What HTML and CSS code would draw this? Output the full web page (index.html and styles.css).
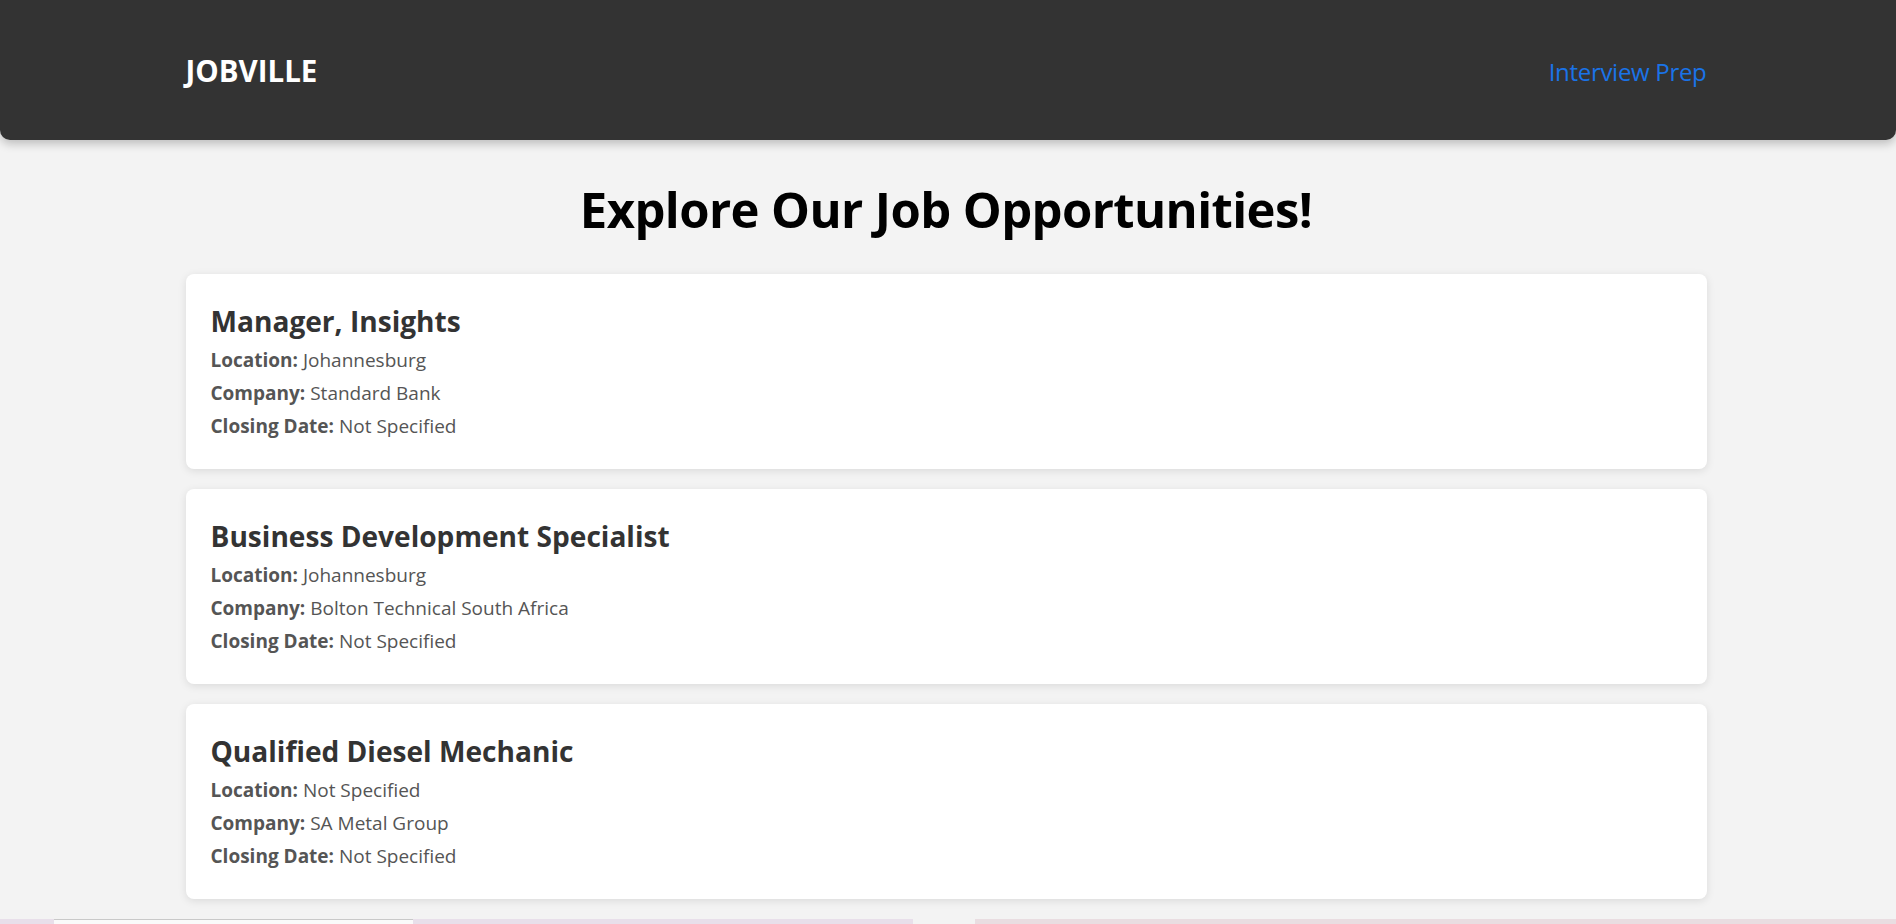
FILE: index.html
```html
<!DOCTYPE html>
<html lang="en">
<head>
<meta charset="utf-8">
<title>Jobville</title>
<link rel="stylesheet" href="styles.css">
</head>
<body>
<header class="site-header">
  <div class="header-inner">
    <div class="logo">JOBVILLE</div>
    <a class="nav-link" href="#">Interview Prep</a>
  </div>
</header>
<main class="main">
  <h1 class="page-title">Explore Our Job Opportunities!</h1>
  <div class="job-list">
    <article class="job-card">
      <h2 class="job-title">Manager, Insights</h2>
      <p class="job-meta"><strong>Location:</strong> Johannesburg</p>
      <p class="job-meta"><strong>Company:</strong> Standard Bank</p>
      <p class="job-meta"><strong>Closing Date:</strong> Not Specified</p>
    </article>
    <article class="job-card">
      <h2 class="job-title">Business Development Specialist</h2>
      <p class="job-meta"><strong>Location:</strong> Johannesburg</p>
      <p class="job-meta"><strong>Company:</strong> Bolton Technical South Africa</p>
      <p class="job-meta"><strong>Closing Date:</strong> Not Specified</p>
    </article>
    <article class="job-card">
      <h2 class="job-title">Qualified Diesel Mechanic</h2>
      <p class="job-meta"><strong>Location:</strong> Not Specified</p>
      <p class="job-meta"><strong>Company:</strong> SA Metal Group</p>
      <p class="job-meta"><strong>Closing Date:</strong> Not Specified</p>
    </article>
  </div>
</main>
<section class="below">
  <div class="below-left"><div class="below-box"></div></div>
  <div class="below-right"></div>
</section>
</body>
</html>
```
FILE: styles.css
```css
* { box-sizing: border-box; }
html, body { margin: 0; padding: 0; }
body {
  background: #f3f3f3;
  font-family: "Open Sans", "Noto Sans", sans-serif;
  color: #333;
  overflow: hidden;
}
.site-header {
  background: #333333;
  height: 140px;
  border-radius: 0 0 10px 10px;
  box-shadow: 0 4px 10px rgba(0, 0, 0, 0.22);
  display: flex;
  align-items: center;
}
.header-inner {
  width: 1521px;
  margin: 0 auto;
  display: flex;
  justify-content: space-between;
  align-items: center;
  position: relative;
  left: -2px;
}
.logo {
  color: #ffffff;
  font-weight: 700;
  font-size: 29.5px;
  letter-spacing: 0;
}
.nav-link {
  color: #1a73e8;
  text-decoration: none;
  font-size: 24px;
  letter-spacing: -0.3px;
  padding-top: 3px;
}
.main {
  width: 1521px;
  margin: 0 auto;
  position: relative;
  left: -2px;
}
.page-title {
  text-align: center;
  color: #000;
  font-size: 49px;
  font-weight: 700;
  letter-spacing: -0.6px;
  line-height: 60px;
  margin: 39px 0 35px;
}
.job-list {
  display: flex;
  flex-direction: column;
  gap: 20px;
}
.job-card {
  background: #fff;
  border-radius: 8px;
  box-shadow: 0 2px 8px rgba(0, 0, 0, 0.1);
  height: 195px;
  padding: 29px 25px 0;
}
.job-title {
  margin: 0 0 5px;
  font-size: 28.1px;
  line-height: 36px;
  font-weight: 700;
  color: #333;
}
.job-meta {
  margin: 0;
  font-size: 19px;
  line-height: 33px;
  color: #555;
}
.job-meta strong { color: #555; }
.below {
  margin-top: 20px;
  display: flex;
  gap: 62px;
  height: 20px;
}
.below-left {
  width: 913px;
  background: #e8dfea;
  padding-left: 54px;
}
.below-box {
  width: 359px;
  height: 100%;
  background: #fafafa;
  border-top: 1px solid #c9c9c9;
}
.below-right {
  flex: 1;
  background: #e9dde1;
}
```
